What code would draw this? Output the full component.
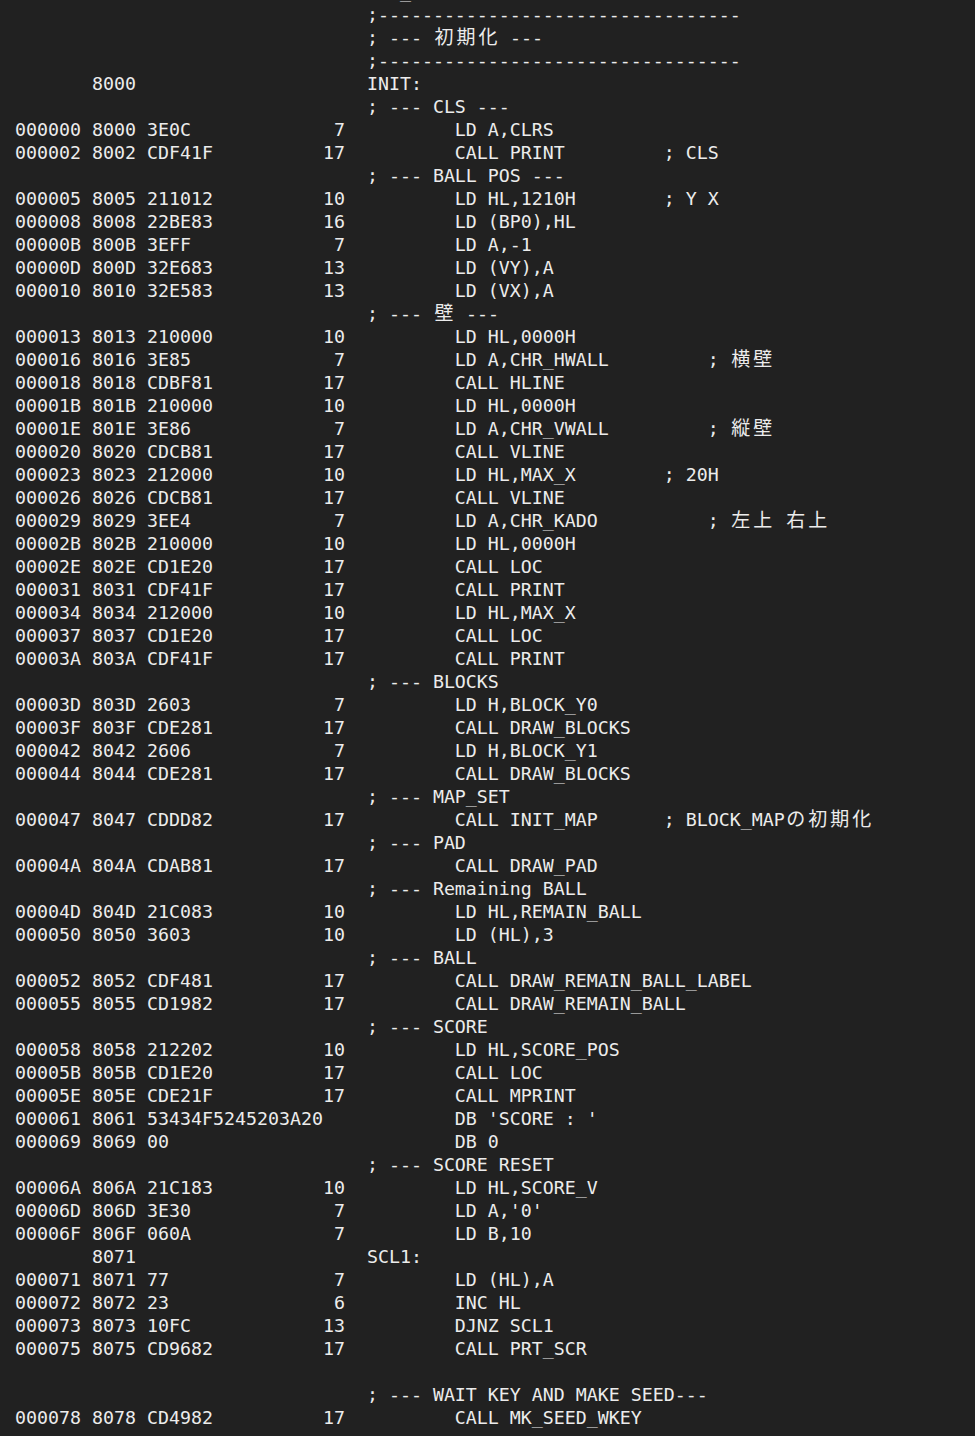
import React from "react";

// listing rows: [addr, loc, bytes, cycles, source]
const CJK = /([\u3040-\u30ff\u3400-\u9fff]+)/;

const ins = (text, comment, col) =>
  comment ? ("        " + text).padEnd(col - 32) + comment : "        " + text;

const lines = [
  ["", "", "", "", "  Z_XXXXXXXXXX(H"],
  ["", "", "", "", ";---------------------------------"],
  ["", "", "", "", "; --- 初期化 ---"],
  ["", "", "", "", ";---------------------------------"],
  ["", "8000", "", "", "INIT:"],
  ["", "", "", "", "; --- CLS ---"],
  ["000000", "8000", "3E0C", "7", ins("LD A,CLRS")],
  ["000002", "8002", "CDF41F", "17", ins("CALL PRINT", "; CLS", 59)],
  ["", "", "", "", "; --- BALL POS ---"],
  ["000005", "8005", "211012", "10", ins("LD HL,1210H", "; Y X", 59)],
  ["000008", "8008", "22BE83", "16", ins("LD (BP0),HL")],
  ["00000B", "800B", "3EFF", "7", ins("LD A,-1")],
  ["00000D", "800D", "32E683", "13", ins("LD (VY),A")],
  ["000010", "8010", "32E583", "13", ins("LD (VX),A")],
  ["", "", "", "", "; --- 壁 ---"],
  ["000013", "8013", "210000", "10", ins("LD HL,0000H")],
  ["000016", "8016", "3E85", "7", ins("LD A,CHR_HWALL", "; 横壁", 63)],
  ["000018", "8018", "CDBF81", "17", ins("CALL HLINE")],
  ["00001B", "801B", "210000", "10", ins("LD HL,0000H")],
  ["00001E", "801E", "3E86", "7", ins("LD A,CHR_VWALL", "; 縦壁", 63)],
  ["000020", "8020", "CDCB81", "17", ins("CALL VLINE")],
  ["000023", "8023", "212000", "10", ins("LD HL,MAX_X", "; 20H", 59)],
  ["000026", "8026", "CDCB81", "17", ins("CALL VLINE")],
  ["000029", "8029", "3EE4", "7", ins("LD A,CHR_KADO", "; 左上 右上", 63)],
  ["00002B", "802B", "210000", "10", ins("LD HL,0000H")],
  ["00002E", "802E", "CD1E20", "17", ins("CALL LOC")],
  ["000031", "8031", "CDF41F", "17", ins("CALL PRINT")],
  ["000034", "8034", "212000", "10", ins("LD HL,MAX_X")],
  ["000037", "8037", "CD1E20", "17", ins("CALL LOC")],
  ["00003A", "803A", "CDF41F", "17", ins("CALL PRINT")],
  ["", "", "", "", "; --- BLOCKS"],
  ["00003D", "803D", "2603", "7", ins("LD H,BLOCK_Y0")],
  ["00003F", "803F", "CDE281", "17", ins("CALL DRAW_BLOCKS")],
  ["000042", "8042", "2606", "7", ins("LD H,BLOCK_Y1")],
  ["000044", "8044", "CDE281", "17", ins("CALL DRAW_BLOCKS")],
  ["", "", "", "", "; --- MAP_SET"],
  ["000047", "8047", "CDDD82", "17", ins("CALL INIT_MAP", "; BLOCK_MAPの初期化", 59)],
  ["", "", "", "", "; --- PAD"],
  ["00004A", "804A", "CDAB81", "17", ins("CALL DRAW_PAD")],
  ["", "", "", "", "; --- Remaining BALL"],
  ["00004D", "804D", "21C083", "10", ins("LD HL,REMAIN_BALL")],
  ["000050", "8050", "3603", "10", ins("LD (HL),3")],
  ["", "", "", "", "; --- BALL"],
  ["000052", "8052", "CDF481", "17", ins("CALL DRAW_REMAIN_BALL_LABEL")],
  ["000055", "8055", "CD1982", "17", ins("CALL DRAW_REMAIN_BALL")],
  ["", "", "", "", "; --- SCORE"],
  ["000058", "8058", "212202", "10", ins("LD HL,SCORE_POS")],
  ["00005B", "805B", "CD1E20", "17", ins("CALL LOC")],
  ["00005E", "805E", "CDE21F", "17", ins("CALL MPRINT")],
  ["000061", "8061", "53434F5245203A20", "", ins("DB 'SCORE : '")],
  ["000069", "8069", "00", "", ins("DB 0")],
  ["", "", "", "", "; --- SCORE RESET"],
  ["00006A", "806A", "21C183", "10", ins("LD HL,SCORE_V")],
  ["00006D", "806D", "3E30", "7", ins("LD A,'0'")],
  ["00006F", "806F", "060A", "7", ins("LD B,10")],
  ["", "8071", "", "", "SCL1:"],
  ["000071", "8071", "77", "7", ins("LD (HL),A")],
  ["000072", "8072", "23", "6", ins("INC HL")],
  ["000073", "8073", "10FC", "13", ins("DJNZ SCL1")],
  ["000075", "8075", "CD9682", "17", ins("CALL PRT_SCR")],
  ["", "", "", "", ""],
  ["", "", "", "", "; --- WAIT KEY AND MAKE SEED---"],
  ["000078", "8078", "CD4982", "17", ins("CALL MK_SEED_WKEY")],
];

const fmt = ([addr, loc, bytes, cyc, src]) => {
  const left = (addr.padEnd(6) + " " + loc.padEnd(4) + " " + bytes).padEnd(28);
  return (left + cyc.padStart(2)).padEnd(32) + src;
};

const Text = ({ s }) =>
  s.split(CJK).map((part, i) =>
    CJK.test(part) ? (
      [...part].map((ch, j) => (
        <span
          key={i + "-" + j}
          className="inline-block w-[22px] text-center text-[19px] leading-none font-['Noto_Sans_CJK_JP',sans-serif]"
        >
          {ch}
        </span>
      ))
    ) : (
      <span key={i}>{part}</span>
    )
  );

export default function App() {
  return (
    <div className="h-[1436px] overflow-hidden bg-[#212121] text-[#ececec]">
      <div className="pl-[15px] -mt-[20px] font-['DejaVu_Sans_Mono',monospace] text-[18.27px]">
        {lines.map((l, i) => (
          <div key={i} className="h-[23px] leading-[23px] whitespace-pre">
            <Text s={fmt(l)} />
          </div>
        ))}
      </div>
    </div>
  );
}
